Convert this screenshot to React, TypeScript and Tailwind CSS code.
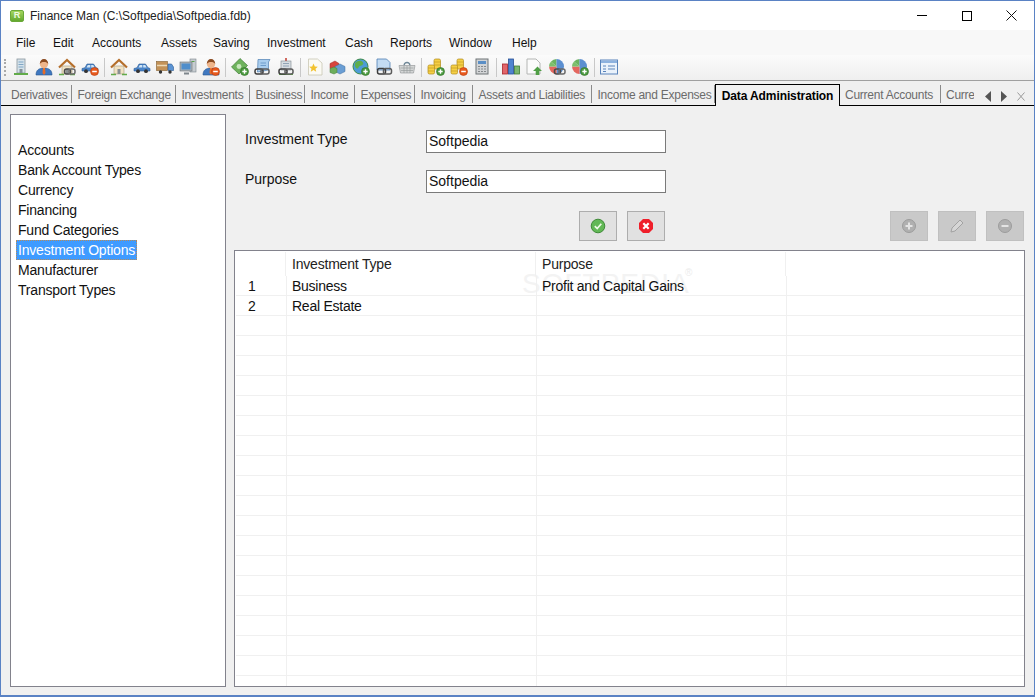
import React from 'react';

const menus = [
  { label: 'File', w: 'w-[37px]' },
  { label: 'Edit', w: 'w-[39px]' },
  { label: 'Accounts', w: 'w-[69px]' },
  { label: 'Assets', w: 'w-[52px]' },
  { label: 'Saving', w: 'w-[54px]' },
  { label: 'Investment', w: 'w-[78px]' },
  { label: 'Cash', w: 'w-[45px]' },
  { label: 'Reports', w: 'w-[59px]' },
  { label: 'Window', w: 'w-[63px]' },
  { label: 'Help', w: 'w-[40px]' },
];

const tabs = [
  { label: 'Derivatives', w: 'w-[67px]' },
  { label: 'Foreign Exchange', w: 'w-[104px]' },
  { label: 'Investments', w: 'w-[74px]' },
  { label: 'Business', w: 'w-[55px]' },
  { label: 'Income', w: 'w-[50px]' },
  { label: 'Expenses', w: 'w-[60px]' },
  { label: 'Invoicing', w: 'w-[58px]' },
  { label: 'Assets and Liabilities', w: 'w-[119px]' },
  { label: 'Income and Expenses', w: 'w-[123px]' },
];

const lookups = ['Accounts', 'Bank Account Types', 'Currency', 'Financing', 'Fund Categories', 'Investment Options', 'Manufacturer', 'Transport Types'];

// small overlay badges used on the toolbar icons
const Plus = () => (
  <g>
    <circle cx="13.5" cy="13.5" r="4" fill="#4c9a3f" stroke="#2f6e2a" strokeWidth="0.6" />
    <path d="M13.5 11.3v4.4M11.3 13.5h4.4" stroke="#fff" strokeWidth="1.4" />
  </g>
);

const Minus = () => (
  <g>
    <circle cx="13.5" cy="13.5" r="4" fill="#e8591c" stroke="#b63c10" strokeWidth="0.6" />
    <path d="M11.2 13.5h4.6" stroke="#fff" strokeWidth="1.5" />
  </g>
);

const Chain = () => (
  <g fill="none">
    <rect x="6.5" y="11" width="6" height="5" rx="2" stroke="#4a4a4a" strokeWidth="1.5" />
    <rect x="11" y="11" width="6" height="5" rx="2" stroke="#6a6a6a" strokeWidth="1.5" />
  </g>
);

const Building = () => (
  <g>
    <rect x="5" y="1" width="8" height="14" fill="#d5e2ea" stroke="#8a979e" strokeWidth="0.8" />
    <path d="M6.5 4h5M6.5 6.5h5M6.5 9h5" stroke="#7fa6c6" strokeWidth="1" />
    <rect x="7.5" y="11" width="3" height="4" fill="#85929a" />
    <path d="M2 16h14" stroke="#62ab4a" strokeWidth="2" />
  </g>
);

const Person = () => (
  <g>
    <path d="M1 17c0-5 3-7 8-7s8 2 8 7z" fill="#3f78c0" stroke="#27568f" strokeWidth="0.6" />
    <path d="M8 10h2l.5 5-1.500 2-1.500-2z" fill="#e86b25" />
    <circle cx="9" cy="6" r="4.200" fill="#efb58a" />
    <path d="M4.800 6c0-3 1.700-5 4.200-5s4.200 2 4.200 5c-1-1.500-2.200-2-4.200-2s-3.200.5-4.200 2z" fill="#8a4a20" />
  </g>
);

const House = () => (
  <g>
    <path d="M4 8h10v8H4z" fill="#f0e2c4" stroke="#a89a7c" strokeWidth="0.6" />
    <path d="M1 9.500 9 2l8 7.500" fill="none" stroke="#b56f2c" strokeWidth="2.200" />
    <rect x="7.500" y="11" width="3" height="5" fill="#8a8f92" />
    <path d="M1 16.500h5M12 16.500h5" stroke="#62ab4a" strokeWidth="1.500" />
  </g>
);

const Car = () => (
  <g>
    <path d="M1 13v-2.500l3-.8L6 6h6.500l2.500 3.700 2 .8V13z" fill="#4a84c8" stroke="#2c5a94" strokeWidth="0.6" />
    <path d="M6.800 7h2.500v2.500H5.500zM10.200 7h2l1.500 2.500h-3.500z" fill="#cfe4f5" />
    <circle cx="5" cy="13.200" r="1.900" fill="#333" />
    <circle cx="13" cy="13.200" r="1.900" fill="#333" />
  </g>
);

const Truck = () => (
  <g>
    <rect x="0.500" y="3.500" width="11" height="9" fill="#c39258" stroke="#84602f" strokeWidth="0.6" />
    <path d="M1 7.500h10" stroke="#ecd9b6" strokeWidth="1.500" />
    <path d="M12 6h3.500l2 3v3.500H12z" fill="#5b93d3" stroke="#2c5a94" strokeWidth="0.6" />
    <circle cx="4.500" cy="14" r="1.700" fill="#333" />
    <circle cx="14" cy="14" r="1.700" fill="#333" />
  </g>
);

const Computer = () => (
  <g>
    <rect x="11" y="1" width="6" height="13" fill="#c7ccd0" stroke="#7e868c" strokeWidth="0.6" />
    <path d="M12.500 3.500h3" stroke="#5aa04c" strokeWidth="1" />
    <rect x="1" y="4" width="12" height="9" fill="#aab2b8" stroke="#6c747a" strokeWidth="0.6" />
    <rect x="2.500" y="5.500" width="9" height="6" fill="#4f8ecb" />
    <path d="M5 15.500h5" stroke="#7e868c" strokeWidth="2" />
  </g>
);

const Money = () => (
  <g>
    <path d="M0.500 9 9 .5l7.500 7-8.500 8.500z" fill="#6eb25d" stroke="#3f7c35" strokeWidth="0.7" />
    <circle cx="8" cy="8.500" r="2.400" fill="#c8e6bd" />
    <Plus />
  </g>
);

const Scroll = () => (
  <g>
    <path d="M4 1.500h12l-1.500 2.500V12l-11 2z" fill="#a9cdee" stroke="#4f7fb3" strokeWidth="0.7" />
    <path d="M6.500 5h5.500M6.500 7.500h5.500" stroke="#5f8fc0" strokeWidth="0.800" />
    <rect x="1" y="11" width="8" height="5" rx="2" fill="none" stroke="#3c3c3c" strokeWidth="1.500" />
    <rect x="7" y="11" width="8" height="5" rx="2" fill="none" stroke="#5b5b5b" strokeWidth="1.500" />
  </g>
);

const Form = () => (
  <g>
    <path d="M9 0v3" stroke="#c23a2c" strokeWidth="1.500" />
    <rect x="4" y="3" width="10" height="9" fill="#d7dde2" stroke="#7e868c" strokeWidth="0.6" />
    <path d="M6 5.500h6M6 8h6" stroke="#7f96aa" strokeWidth="0.800" />
    <path d="M2 16.500h14" stroke="#62ab4a" strokeWidth="1" />
    <rect x="2" y="11" width="8" height="5" rx="2" fill="none" stroke="#3c3c3c" strokeWidth="1.500" />
    <rect x="8" y="11" width="8" height="5" rx="2" fill="none" stroke="#5b5b5b" strokeWidth="1.500" />
  </g>
);

const StarDoc = () => (
  <g>
    <path d="M2.500 1h9l4.500 4v12h-13.500z" fill="#fbfaf4" stroke="#c9c6b4" strokeWidth="0.8" />
    <path d="m7.500 5.500 1.300 2.900 3 .3-2.300 2 .7 3-2.700-1.600-2.700 1.600.7-3-2.300-2 3-.3z" fill="#f2c22e" />
  </g>
);

const Cubes = () => (
  <g>
    <path d="M1 5.500 6 3l4 2.500v5l-4 2.500-5-2.500z" fill="#d7453d" stroke="#99302b" strokeWidth="0.500" />
    <path d="M6 8.500 11 6l5 2.500v5l-5 2.500-5-2.500z" fill="#6a9ed4" stroke="#3e6d9e" strokeWidth="0.500" />
    <path d="M1 10.500 5 9l3 1.500v4L5 16l-4-1.500z" fill="#6cae5b" stroke="#447c39" strokeWidth="0.500" />
  </g>
);

const Globe = () => (
  <g>
    <circle cx="8.500" cy="8.500" r="7.500" fill="#4d9bd6" stroke="#3c8a45" strokeWidth="1" />
    <path d="M4 4c3-2 6-1.500 7 .5s-1 3-3 3.500-1 3-3 2.500S2 6 4 4z" fill="#5fae4c" />
    <Plus />
  </g>
);

const ChainDoc = () => (
  <g>
    <path d="M2 1h9.500l3.500 3.500V12H2z" fill="#c4dcf3" stroke="#4f7fb3" strokeWidth="0.8" />
    <rect x="2.500" y="10.500" width="8" height="5.500" rx="2" fill="none" stroke="#3c3c3c" strokeWidth="1.500" />
    <rect x="8.500" y="10.500" width="8" height="5.500" rx="2" fill="none" stroke="#5b5b5b" strokeWidth="1.500" />
  </g>
);

const Basket = () => (
  <g>
    <path d="M6 7.500C6.500 3.500 11.500 3.500 12 7.500" fill="none" stroke="#6f8796" strokeWidth="1.300" />
    <path d="M1 7.500h16l-1.500 7.500h-13z" fill="#d4d6d6" stroke="#8c8f90" strokeWidth="0.600" />
    <path d="M2.500 10h13M3 12.500h12M6 8v7M9 8v7M12 8v7" stroke="#9a9d9e" strokeWidth="0.700" />
  </g>
);

const Coins = () => (
  <g>
    <rect x="7" y="1" width="6.500" height="10" rx="1.500" fill="#f5cf45" stroke="#b08a1c" strokeWidth="0.700" />
    <path d="M7 4h6.500M7 7h6.500" stroke="#c49c20" strokeWidth="0.700" />
    <rect x="1" y="7" width="6.500" height="9" rx="1.500" fill="#f5cf45" stroke="#b08a1c" strokeWidth="0.700" />
    <path d="M1 10h6.500M1 13h6.500" stroke="#c49c20" strokeWidth="0.700" />
  </g>
);

const Calculator = () => (
  <g>
    <rect x="3" y="1" width="12" height="15" fill="#d2d4d6" stroke="#6f7477" strokeWidth="1" />
    <rect x="5" y="3" width="8" height="3" fill="#5b8fc6" />
    <path d="M5 8.500h8M5 11h8M5 13.500h8" stroke="#85898c" strokeWidth="1.200" strokeDasharray="2 1" />
  </g>
);

const Bars = () => (
  <g>
    <rect x="0.500" y="6" width="5" height="10" fill="#e2656a" stroke="#a8262c" strokeWidth="0.800" />
    <rect x="6.500" y="1" width="5" height="15" fill="#4f83cf" stroke="#274f96" strokeWidth="0.800" />
    <rect x="12.500" y="8" width="5" height="8" fill="#7cb66f" stroke="#3d7c34" strokeWidth="0.800" />
  </g>
);

const UpDoc = () => (
  <g>
    <path d="M2 1h9l4 4v11H2z" fill="#fbfbfb" stroke="#b4b6b4" strokeWidth="1" />
    <path d="M12.500 8.500 17 13h-2.700v4h-3.600v-4H8z" fill="#4f9e45" />
  </g>
);

const Pie = () => (
  <g>
    <path d="M8.500 8.500 3 3.500a7.500 7.500 0 0 1 5.500-2.500z" fill="#6cb45f" />
    <path d="M8.500 8.500V1a7.500 7.500 0 0 1 0 15z" fill="#5b8fd0" />
    <path d="M8.500 8.500V16A7.500 7.500 0 0 1 1 8.500z" fill="#e4675f" />
    <path d="M8.500 8.500H1A7.500 7.500 0 0 1 3 3.500z" fill="#7cc06c" />
  </g>
);

const Details = () => (
  <g>
    <rect x="0.500" y="2" width="17" height="14" fill="#eaf2fb" stroke="#5a84bb" strokeWidth="1" />
    <rect x="1" y="2.500" width="16" height="2.500" fill="#8db2df" />
    <path d="M3 8h3M8 8h7M3 11h3M8 11h7M3 13.500h3" stroke="#5a84bb" strokeWidth="1" />
  </g>
);

const toolbarGroups: React.ReactNode[][] = [
  [
    <Building />,
    <Person />,
    <><House /><Chain /></>,
    <><Car /><Minus /></>,
  ],
  [
    <House />,
    <Car />,
    <Truck />,
    <Computer />,
    <><Person /><Minus /></>,
  ],
  [<Money />, <Scroll />, <Form />],
  [
    <StarDoc />,
    <Cubes />,
    <Globe />,
    <ChainDoc />,
    <Basket />,
  ],
  [
    <><Coins /><Plus /></>,
    <><Coins /><Minus /></>,
    <Calculator />,
  ],
  [
    <Bars />,
    <UpDoc />,
    <><Pie /><Chain /></>,
    <><Pie /><Plus /></>,
  ],
  [<Details />],
];

const ToolIcon = ({ children }: { children: React.ReactNode }) => (
  <div className="w-[23px] flex justify-center">
    <svg width="18" height="18" viewBox="0 0 18 18">{children}</svg>
  </div>
);

const ActionButton = ({ disabled, children }: { disabled?: boolean; children: React.ReactNode }) => (
  <div className={`w-[38px] h-[30px] flex items-center justify-center border ${disabled ? 'bg-[#c9c9c9] border-[#c0c0c0]' : 'bg-[#e1e1e1] border-[#adadad]'}`}>
    <svg width="16" height="16" viewBox="0 0 16 16">{children}</svg>
  </div>
);

const GridCols = ({ first, second, third }: { first?: string; second?: string; third?: string }) => (
  <div className="relative flex h-[20px] shrink-0 border-b border-[#f0f0f0] text-[14px] tracking-[-0.25px] leading-[21px] text-[#111]">
    <div className="w-[51px] pl-[12px] border-r border-[#f0f0f0]">{first}</div>
    <div className="w-[250px] pl-[5px] border-r border-[#f0f0f0]">{second}</div>
    <div className="w-[250px] pl-[5px] border-r border-[#f0f0f0]">{third}</div>
  </div>
);

export default function App() {
  const emptyRows = Array.from({ length: 19 }, (_, i) => i);

  return (
    <div className="w-[1035px] h-[697px] flex flex-col overflow-hidden border border-b-2 border-[#5a82c4] bg-[#f0f0f0] text-[#111] font-['Liberation_Sans',Arial,sans-serif]">
      {/* title bar */}
      <div className="h-[29px] shrink-0 bg-white flex items-center pl-[9px] relative">
        <div className="w-[14px] h-[12px] rounded-[2px] bg-gradient-to-b from-[#a4d65e] to-[#62a82e] border border-[#6aa838] flex items-center justify-center text-[9px] font-bold leading-none text-[#eefae0]">R</div>
        <span className="ml-[6px] text-[12px] text-[#222]">Finance Man (C:\Softpedia\Softpedia.fdb)</span>
        <div className="ml-auto flex items-center">
          <div className="w-[45px] flex justify-center"><div className="w-[10px] h-px bg-black" /></div>
          <div className="w-[45px] flex justify-center"><div className="w-[10px] h-[10px] border border-black" /></div>
          <div className="w-[45px] flex justify-center">
            <svg width="11" height="11" viewBox="0 0 11 11"><path d="M.5.500l10 10M10.500.500l-10 10" stroke="#111" strokeWidth="1" /></svg>
          </div>
        </div>
      </div>

      {/* menu */}
      <div className="h-[25px] shrink-0 bg-[#f8f8f8] flex items-center pl-[15px] text-[12px] text-[#111]">
        {menus.map(m => (
          <div key={m.label} className={m.w}>{m.label}</div>
        ))}
      </div>

      {/* toolbar */}
      <div className="h-[26px] shrink-0 pb-[1px] bg-gradient-to-b from-[#fbfbfb] to-[#efefef] border-b border-[#a0a0a0] flex items-center pl-[3px] relative">
        <div className="h-[17px] w-[2px] mr-[3.5px] border-l-2 border-dotted border-[#a9a9a9]" />
        {toolbarGroups.map((group, g) => (
          <React.Fragment key={g}>
            {g > 0 && <div className="w-px h-[19px] mx-[2.5px] bg-[#c8c8c8]" />}
            {group.map((icon, i) => <ToolIcon key={i}>{icon}</ToolIcon>)}
          </React.Fragment>
        ))}
      </div>

      {/* tabs */}
      <div className="h-[25px] shrink-0 flex items-end pl-[4px] relative border-b border-black text-[12px] tracking-[-0.25px] text-[#6b6b6b]">
        {tabs.map((t, i) => (
          <div key={t.label} className={`${t.w} ${i === 0 ? 'pl-[6px]' : 'pl-[5.5px]'} h-[18px] mb-[2px] shrink-0 border-r border-[#8a8a8a] leading-[21px] whitespace-nowrap overflow-hidden`}>{t.label}</div>
        ))}
        <div className="w-[125px] h-[22px] -mb-px shrink-0 bg-[#f0f0f0] border border-b-0 border-black text-center text-[12px] tracking-[-0.1px] font-bold leading-[23px] text-black">Data Administration</div>
        <div className="w-[101px] h-[18px] mb-[2px] shrink-0 pl-[5px] border-r border-[#8a8a8a] leading-[21px] whitespace-nowrap overflow-hidden">Current Accounts</div>
        <div className="w-[33px] h-[18px] mb-[2px] shrink-0 pl-[5px] leading-[21px] whitespace-nowrap overflow-hidden">Curre</div>
        <div className="ml-auto mb-[3px] flex items-center gap-[10px] pr-[9px]">
          <svg width="6" height="11" viewBox="0 0 6 11"><path d="M6 0v11L0 5.500z" fill="#555" /></svg>
          <svg width="6" height="11" viewBox="0 0 6 11"><path d="M0 0v11l6-5.500z" fill="#555" /></svg>
          <svg width="8" height="9" viewBox="0 0 8 9"><path d="M.5.500l7 8M7.500.500l-7 8" stroke="#9a9a9a" strokeWidth="1" /></svg>
        </div>
      </div>

      {/* body */}
      <div className="flex-1 min-h-0 flex pl-[9px] pr-[9px] pt-[8px] pb-[8px] gap-[8px]">
        <div className="w-[216px] shrink-0 bg-white border border-[#82828c] pt-[25px] pl-[5px] text-[14px] tracking-[-0.2px] text-[#111]">
          {lookups.map(item => (
            <div key={item} className="h-[20px] flex items-center">
              <span className={item === 'Investment Options' ? 'h-[20px] w-[121px] pl-[2px] leading-[20px] whitespace-nowrap bg-[#3f9bff] text-white outline outline-dotted outline-[#b98a55] -outline-offset-1' : 'pl-[2px]'}>{item}</span>
            </div>
          ))}
        </div>

        <div className="flex-1 min-w-0 flex flex-col">
          <div className="flex h-[23px] mt-[16px] items-center pl-[11px] text-[14px]">
            <span className="w-[181px] -mt-[4px]">Investment Type</span>
            <div className="w-[240px] h-[23px] bg-white border border-[#7a7a7a] pl-[2px] leading-[21px]">Softpedia</div>
          </div>
          <div className="flex h-[23px] mt-[17px] items-center pl-[11px] text-[14px]">
            <span className="w-[181px] -mt-[4px]">Purpose</span>
            <div className="w-[240px] h-[23px] bg-white border border-[#7a7a7a] pl-[2px] leading-[21px]">Softpedia</div>
          </div>

          <div className="flex mt-[18px] h-[30px] pl-[345px] pr-[1px]">
            <div className="flex gap-[10px]">
              <ActionButton>
                <circle cx="8" cy="8" r="6.800" fill="#62b856" stroke="#3f8a38" strokeWidth="1" />
                <path d="M4.800 8.200 7.200 10.500 11.300 5.800" fill="none" stroke="#eefae8" strokeWidth="1.700" />
              </ActionButton>
              <ActionButton>
                <path d="M5 1h6l4 4v6l-4 4H5l-4-4V5z" fill="#ef1f2a" />
                <path d="M5.300 5.300l5.400 5.400M10.700 5.300l-5.400 5.400" stroke="#fff" strokeWidth="2.200" />
              </ActionButton>
            </div>
            <div className="ml-auto flex gap-[10px]">
              <ActionButton disabled>
                <circle cx="8" cy="8" r="6.500" fill="#b0b0b0" stroke="#9c9c9c" strokeWidth="1" />
                <path d="M8 4.500v7M4.500 8h7" stroke="#e4e4e4" strokeWidth="2" />
              </ActionButton>
              <ActionButton disabled>
                <path d="M2 14l1-4 8-8 3 3-8 8z" fill="#d6d6d6" stroke="#a2a2a2" strokeWidth="1" />
              </ActionButton>
              <ActionButton disabled>
                <circle cx="8" cy="8" r="6.500" fill="#b0b0b0" stroke="#9c9c9c" strokeWidth="1" />
                <path d="M4.500 8h7" stroke="#e4e4e4" strokeWidth="2" />
              </ActionButton>
            </div>
          </div>

          <div className="flex-1 min-h-0 mt-[9px] bg-white border border-[#82828c] pt-[1px] pl-[1px] relative overflow-hidden flex flex-col">
            {/* watermark behind the grid text */}
            <div className="absolute left-[287px] top-[19px] text-[28px] leading-[28px] tracking-[1px] whitespace-nowrap text-[#f3f3f3] pointer-events-none">SOFTPEDIA</div>
            <div className="absolute left-[450px] top-[17px] text-[10px] leading-[10px] text-[#ececec] pointer-events-none">®</div>
            <div className="relative flex h-[24px] shrink-0 text-[14px] tracking-[-0.2px] leading-[25px] text-[#222]">
              <div className="w-[50px] border-r border-[#f0f0f0]" />
              <div className="w-[250px] pl-[6px] border-r border-[#f0f0f0]">Investment Type</div>
              <div className="w-[250px] pl-[6px] border-r border-[#f0f0f0]">Purpose</div>
            </div>
            <GridCols first="1" second="Business" third="Profit and Capital Gains" />
            <GridCols first="2" second="Real Estate" />
            {emptyRows.map(i => <GridCols key={i} />)}
          </div>
        </div>
      </div>
    </div>
  );
}
